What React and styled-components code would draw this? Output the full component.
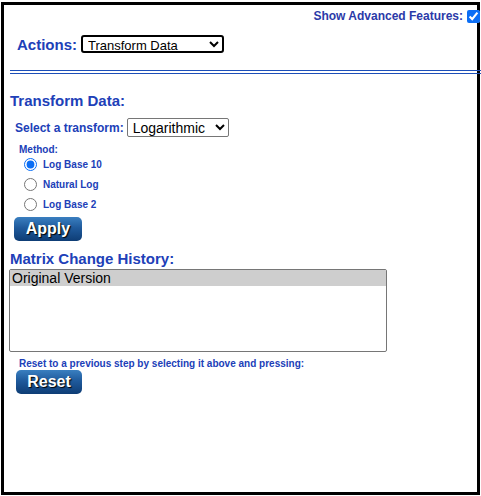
import React from "react";
import styled, { createGlobalStyle } from "styled-components";

const Global = createGlobalStyle`
  html, body { margin: 0; padding: 0; background: #fff; }
  body { font-family: "Liberation Sans", Arial, sans-serif; }
`;

const Frame = styled.div`
  box-sizing: border-box;
  margin: 2px 0 0 1px;
  width: 479px;
  height: 493px;
  border: 3px solid #000;
  padding: 0 0 0 5px;
`;

const TopRow = styled.div`
  display: flex;
  justify-content: flex-end;
  align-items: center;
  gap: 4px;
  height: 16px;
  padding-top: 3px;
  margin-right: -3px;
`;

const SmallLabel = styled.span`
  font-weight: bold;
  font-size: 12px;
  color: #2b3aa8;
`;

const Check = styled.input`
  margin: 0;
  width: 13px;
  height: 13px;
  accent-color: #0b6ef5;
`;

const ActionsRow = styled.div`
  display: flex;
  align-items: center;
  gap: 4px;
  margin: 11px 0 0 8px;
`;

const BigLabel = styled.span`
  font-weight: bold;
  font-size: ${(p) => p.$size || 16}px;
  color: #2040b8;
`;

const Select = styled.select`
  font-family: "Liberation Sans", Arial, sans-serif;
  font-size: ${(p) => p.$size || 13}px;
  height: ${(p) => p.$h || 18}px;
  width: ${(p) => p.$w}px;
  border: ${(p) => (p.$focus ? "2px solid #000" : "1px solid #767676")};
  border-radius: ${(p) => (p.$focus ? 3 : 2)}px;
  background: #fff;
  color: #000;
  padding: 0 0 0 1px;
  margin: 0;
  line-height: normal;
  box-sizing: border-box;
`;

const DoubleRule = styled.div`
  margin: 17px -4px 0 1px;
  height: 2px;
  border-top: 1px solid #1d4fb8;
  border-bottom: 1px solid #1d4fb8;
`;

const Section = styled.div`
  display: flex;
  flex-direction: column;
  align-items: flex-start;
`;

const Heading = styled.div`
  font-weight: bold;
  font-size: 15px;
  color: #2040b8;
  margin: ${(p) => p.$m};
  line-height: 18px;
`;

const SelectRow = styled.div`
  display: flex;
  align-items: center;
  gap: 3px;
  margin: 8px 0 0 6px;
`;

const TinyLabel = styled.div`
  font-weight: bold;
  font-size: 10px;
  color: #2040b8;
  margin: ${(p) => p.$m || "0"};
`;

const RadioList = styled.div`
  display: flex;
  flex-direction: column;
  gap: 7px;
  margin: 3px 0 0 15px;
`;

const RadioRow = styled.label`
  display: flex;
  align-items: center;
  gap: 6px;
  font-weight: bold;
  font-size: 10px;
  color: #2040b8;
`;

const Radio = styled.input`
  margin: 0;
  width: 13px;
  height: 13px;
  accent-color: #0b6ef5;
`;

const BlueButton = styled.button`
  box-sizing: border-box;
  width: ${(p) => p.$w}px;
  height: 24px;
  margin: ${(p) => p.$m};
  border: none;
  border-radius: 5px;
  background: linear-gradient(#3a7fc0 0%, #1f5a9c 45%, #0e3d75 100%);
  color: #fff;
  font-family: "Liberation Sans", Arial, sans-serif;
  font-weight: bold;
  font-size: 16px;
  text-shadow: 1px 1px 1px #000;
  padding: 0;
`;

const ListBox = styled.div`
  box-sizing: border-box;
  width: 378px;
  height: 83px;
  margin: 1px 0 0 0;
  border: 1px solid #767676;
  border-radius: 2px;
  overflow: hidden;
`;

const Option = styled.div`
  font-size: 14px;
  line-height: 16px;
  padding-left: 2px;
  color: #000;
  background: ${(p) => (p.$selected ? "#cecece" : "transparent")};
`;

export default function App() {
  return (
    <>
      <Global />
      <Frame>
        <TopRow>
          <SmallLabel>Show Advanced Features:</SmallLabel>
          <Check type="checkbox" defaultChecked />
        </TopRow>
        <ActionsRow>
          <BigLabel $size={15}>Actions:</BigLabel>
          <Select $focus $w={143} $h={18} $size={13} defaultValue="t">
            <option value="t">Transform Data</option>
          </Select>
        </ActionsRow>
        <DoubleRule />
        <Section>
          <Heading $m="18px 0 0 1px">Transform Data:</Heading>
          <SelectRow>
            <BigLabel $size={12}>Select a transform:</BigLabel>
            <Select $w={102} $h={19} $size={14} defaultValue="log">
              <option value="log">Logarithmic</option>
            </Select>
          </SelectRow>
          <TinyLabel $m="7px 0 0 10px">Method:</TinyLabel>
          <RadioList>
            <RadioRow>
              <Radio type="radio" name="m" defaultChecked />
              Log Base 10
            </RadioRow>
            <RadioRow>
              <Radio type="radio" name="m" />
              Natural Log
            </RadioRow>
            <RadioRow>
              <Radio type="radio" name="m" />
              Log Base 2
            </RadioRow>
          </RadioList>
          <BlueButton $w={68} $m="6px 0 0 5px">Apply</BlueButton>
          <Heading $m="9px 0 0 1px">Matrix Change History:</Heading>
          <ListBox>
            <Option $selected>Original Version</Option>
          </ListBox>
          <TinyLabel $m="6px 0 0 10px">Reset to a previous step by selecting it above and pressing:</TinyLabel>
          <BlueButton $w={66} $m="1px 0 0 7px">Reset</BlueButton>
        </Section>
      </Frame>
    </>
  );
}
